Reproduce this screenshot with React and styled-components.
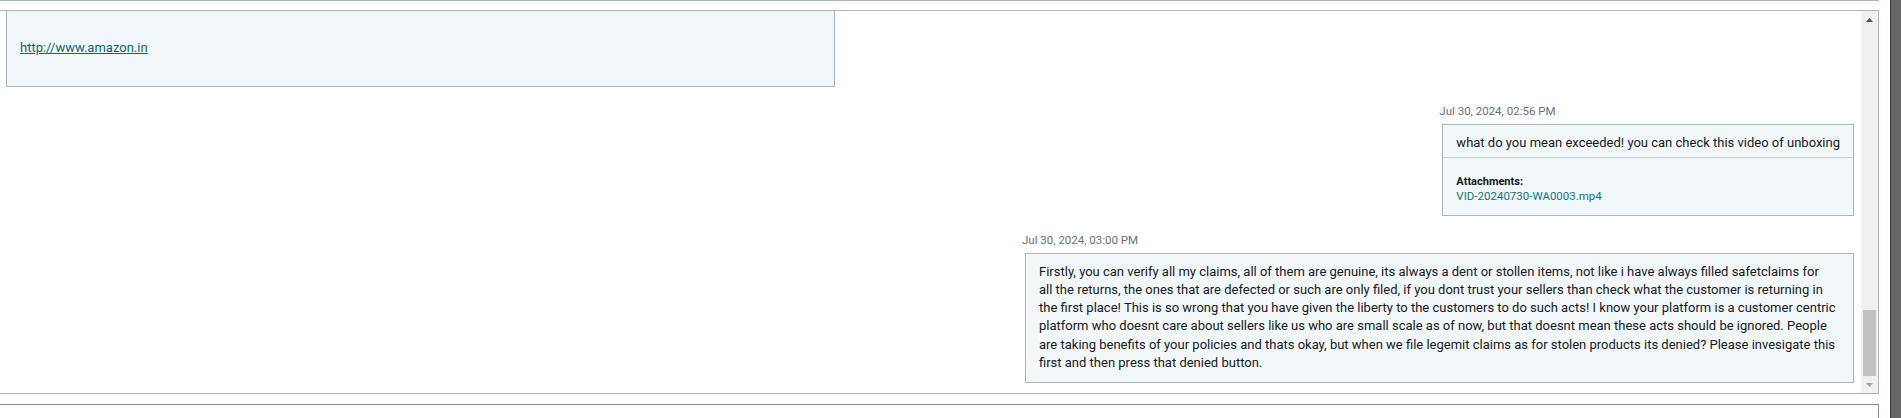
import React from "react";
import styled, { createGlobalStyle } from "styled-components";

const GlobalStyle = createGlobalStyle`
  html, body {
    margin: 0;
    padding: 0;
    background: #ffffff;
  }

  body {
    font-family: Roboto, "Noto Sans", Arial, sans-serif;
    color: #16191f;
  }
`;

// lines kept as in the original bubble so the wrap matches
const messages = [
  {
    id: 1,
    incoming: true,
    link: "http://www.amazon.in",
  },
  {
    id: 2,
    time: "Jul 30, 2024, 02:56 PM",
    lines: ["what do you mean exceeded! you can check this video of unboxing"],
    attachment: "VID-20240730-WA0003.mp4",
  },
  {
    id: 3,
    time: "Jul 30, 2024, 03:00 PM",
    full: true,
    lines: [
      "Firstly, you can verify all my claims, all of them are genuine, its always a dent or stollen items, not like i have always filled safetclaims for",
      "all the returns, the ones that are defected or such are only filed, if you dont trust your sellers than check what the customer is returning in",
      "the first place! This is so wrong that you have given the liberty to the customers to do such acts! I know your platform is a customer centric",
      "platform who doesnt care about sellers like us who are small scale as of now, but that doesnt mean these acts should be ignored. People",
      "are taking benefits of your policies and thats okay, but when we file legemit claims as for stolen products its denied? Please invesigate this",
      "first and then press that denied button.",
    ],
  },
];

const Arrow = ({ down, color }) => (
  <svg width="7" height="4" viewBox="0 0 7 4">
    <path d={down ? "M0 0 H7 L3.5 4 Z" : "M0 4 H7 L3.5 0 Z"} fill={color} />
  </svg>
);

const MessageText = ({ lines }) => (
  <Text>
    {lines.map((line, i) => (
      <React.Fragment key={i}>
        {i > 0 && <br />}
        {line}
      </React.Fragment>
    ))}
  </Text>
);

const App = () => {
  return (
    <>
      <GlobalStyle />
      <Page>
        <Main>
          <TopEdge />
          <Thread>
            <MessageList>
              {messages.map((m) =>
                m.incoming ? (
                  <Group key={m.id} $incoming>
                    <Bubble $full $padTop>
                      <Text $spaced>
                        <LinkText href="#">{m.link}</LinkText>
                      </Text>
                    </Bubble>
                  </Group>
                ) : (
                  <Group key={m.id}>
                    <Time>{m.time}</Time>
                    <Bubble $offset $full={m.full}>
                      {m.attachment ? (
                        <>
                          <Section $top>
                            <MessageText lines={m.lines} />
                          </Section>
                          <Section $attach>
                            <Label>Attachments:</Label>
                            <FileLink href="#">{m.attachment}</FileLink>
                          </Section>
                        </>
                      ) : (
                        <Section>
                          <MessageText lines={m.lines} />
                        </Section>
                      )}
                    </Bubble>
                  </Group>
                )
              )}
            </MessageList>
            <ScrollTrack>
              <ScrollButton>
                <Arrow color="#505050" />
              </ScrollButton>
              <Spacer />
              <Thumb />
              <ScrollButton>
                <Arrow down color="#a3a3a3" />
              </ScrollButton>
            </ScrollTrack>
          </Thread>
          <Composer />
        </Main>
        <WindowBar />
      </Page>
    </>
  );
};

const Page = styled.div`
  display: flex;
  flex-direction: row;
  width: 1901px;
  height: 418px;
  overflow: hidden;
`;

const Main = styled.div`
  width: 1879px;
  display: flex;
  flex-direction: column;
`;

const TopEdge = styled.div`
  height: 0;
  border-bottom: 1px solid #aab7b8;
  margin-bottom: 9px;
`;

const Thread = styled.div`
  height: 384px;
  box-sizing: border-box;
  display: flex;
  flex-direction: row;
  border-top: 1px solid #aab7b8;
  border-bottom: 1px solid #aab7b8;
  border-right: 1px solid #aab7b8;
`;

const MessageList = styled.div`
  flex: 1;
  display: flex;
  flex-direction: column;
  justify-content: flex-end;
  gap: 17px;
  overflow: hidden;
  padding: 0 7px 10px 6px;
`;

const Group = styled.div`
  display: flex;
  flex-direction: column;
  align-items: flex-start;
  align-self: ${({ $incoming }) => ($incoming ? "flex-start" : "flex-end")};
`;

const Time = styled.div`
  font-size: 11.5px;
  line-height: 14px;
  color: #687078;
  margin-bottom: 6px;
`;

const Bubble = styled.div`
  box-sizing: border-box;
  max-width: 829px;
  width: ${({ $full }) => ($full ? "829px" : "auto")};
  margin-left: ${({ $offset }) => ($offset ? "3px" : "0")};
  padding: ${({ $padTop }) => ($padTop ? "46px 13px 10px" : "0")};
  background: #f2f8fa;
  border: 1px solid #aab7b8;
`;

const Section = styled.div`
  padding: ${({ $top, $attach }) =>
    $top ? "9px 13px 5px" : $attach ? "17px 13px 12px" : "9px 13px 10px"};
  border-top: ${({ $attach }) => ($attach ? "1px solid #c6ced1" : "none")};
  display: flex;
  flex-direction: column;
  align-items: flex-start;
`;

const Text = styled.p`
  margin: 0 0 ${({ $spaced }) => ($spaced ? "18px" : "0")};
  font-size: 13px;
  line-height: 18.2px;
  color: #16191f;
  white-space: nowrap;
`;

const LinkText = styled.a`
  color: #0b6577;
  text-decoration: underline;
`;

const Label = styled.div`
  font-size: 11px;
  line-height: 14px;
  font-weight: 700;
  color: #16191f;
`;

const FileLink = styled.a`
  font-size: 11.5px;
  line-height: 14px;
  color: #107585;
  text-decoration: none;
`;

const ScrollTrack = styled.div`
  width: 17px;
  display: flex;
  flex-direction: column;
  background: #f0f0f0;
`;

const ScrollButton = styled.div`
  height: 17px;
  display: flex;
  align-items: center;
  justify-content: center;
`;

const Spacer = styled.div`
  flex: 1;
`;

const Thumb = styled.div`
  height: 66px;
  margin: 0 2px;
  background: #c1c1c1;
`;

const Composer = styled.div`
  margin-top: 10px;
  height: 60px;
  flex-shrink: 0;
  border-top: 1px solid #879196;
  border-right: 1px solid #879196;
  background: #ffffff;
`;

const WindowBar = styled.div`
  width: 10px;
  margin-left: 11px;
  flex-shrink: 0;
  background: #666666;
  border-left: 1px solid #3c3c3c;
`;

export default App;
